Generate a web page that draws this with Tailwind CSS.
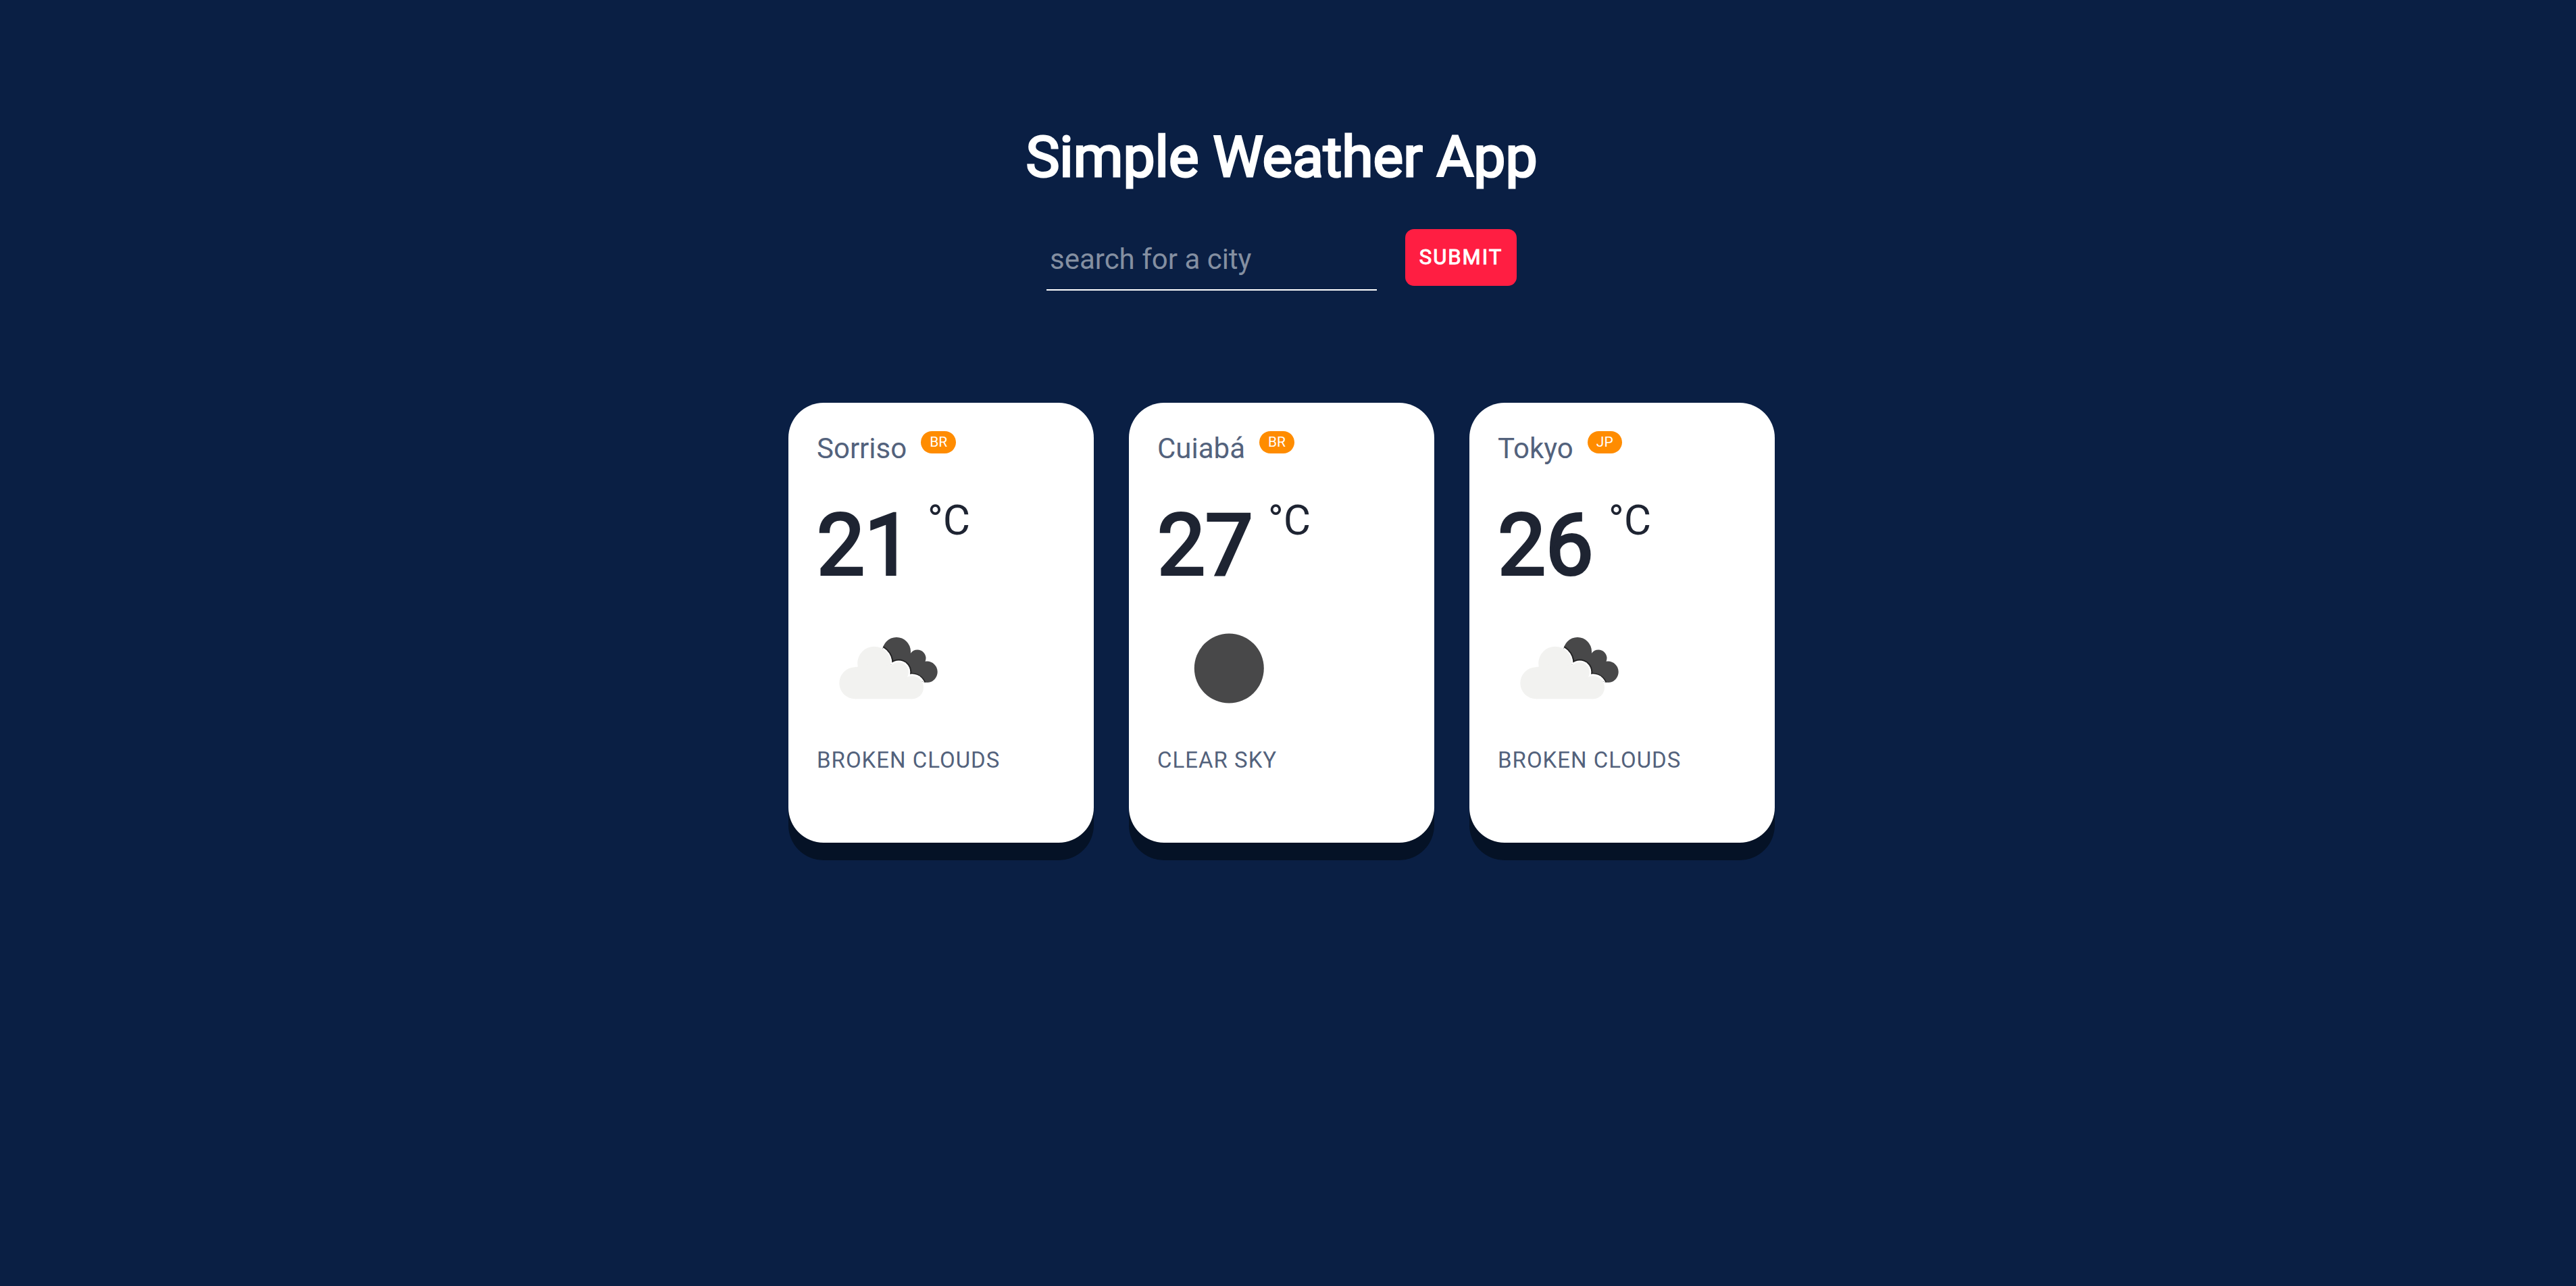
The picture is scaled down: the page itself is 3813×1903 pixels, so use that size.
<!DOCTYPE html>
<html lang="en">
<head>
<meta charset="utf-8">
<meta name="viewport" content="width=device-width, initial-scale=1">
<title>Simple Weather App</title>
<script src="https://cdn.jsdelivr.net/npm/@tailwindcss/browser@4"></script>
</head>
<body class="min-h-screen bg-[#0a1f44] pr-[19px] font-['Roboto',sans-serif] text-white">
<svg class="absolute size-0" aria-hidden="true">
  <defs>
    <clipPath id="back-cloud">
      <circle cx="118" cy="81" r="21"/><circle cx="149" cy="91" r="12.5"/><circle cx="163" cy="111.300" r="15.700"/>
      <path d="M98 76L138 84L150 100L163 112L163 127L120 115Z"/>
    </clipPath>
    <symbol id="broken-clouds" viewBox="0 0 212 212">
      <g clip-path="url(#back-cloud)">
        <path fill="#484849" d="M90 55H185V135H90Z"/>
        <g fill="#232324"><circle cx="84.500" cy="98.700" r="29"/><circle cx="121.300" cy="111.500" r="19"/><circle cx="141" cy="134.300" r="21.500"/></g>
        <g fill="#fff"><circle cx="84.500" cy="98.700" r="27"/><circle cx="121.300" cy="111.500" r="17"/><circle cx="141" cy="134.300" r="20"/><path d="M85 99L121 111L141 134L120 140Z"/></g>
      </g>
      <g fill="#f2f2f0"><circle cx="56.800" cy="127.800" r="23.500"/><circle cx="85" cy="98.500" r="24.800"/><circle cx="121.300" cy="111.500" r="14.500"/><circle cx="141" cy="134.300" r="17"/><path d="M56.800 104.300L85 99L121 104L141 134.300V151.300H56.800Z"/></g>
    </symbol>
    <symbol id="clear-sky" viewBox="0 0 212 212"><circle cx="106.300" cy="106" r="51.500" fill="#484849"/></symbol>
  </defs>
</svg>
<header class="flex flex-col items-center px-6 pt-[189px]">
  <h1 class="text-center text-[84px] leading-[88px] font-normal [-webkit-text-stroke:3px_white]">Simple Weather App</h1>
  <form class="mt-[62px] flex flex-wrap items-start justify-center gap-[42px]">
    <input type="text" aria-label="City" placeholder="search for a city" class="h-[91px] w-[489px] max-w-full border-b-2 border-white bg-transparent px-[5px] text-[42px] outline-none placeholder:text-[#848fa1]">
    <button type="submit" class="h-[84px] w-[165px] rounded-[13px] bg-[#ff1e42] text-[31px] leading-[42px] tracking-[2px] [-webkit-text-stroke:1px_white]">SUBMIT</button>
  </form>
</header>
<main class="px-6 pt-[166px] pb-20">
  <ul class="flex flex-wrap justify-center gap-[52px]">
    <li class="w-[452px] rounded-[52px] bg-white px-[42px] pt-[42px] pb-[100px] text-[#1e2432] shadow-[0_26px_0_#051226]">
      <h2 class="flex items-start gap-[21px] text-[42px] leading-[52px] text-[#53627c]">Sorriso <span class="rounded-full bg-[#ff8c00] px-[13px] text-[21px] leading-[33px] text-white">BR</span></h2>
      <p class="mt-[51px] flex items-start gap-[22px] text-[126px] leading-[133px]"><span class="[-webkit-text-stroke:4px]">21</span> <span class="text-[62px] leading-[58px]">°C</span></p>
      <figure class="mt-[9px]">
        <svg class="size-[212px]" role="img" aria-label="Broken clouds"><use href="#broken-clouds"/></svg>
        <figcaption class="mt-2 text-[33px] leading-[44px] tracking-[1px] text-[#53627c]">BROKEN CLOUDS</figcaption>
      </figure>
    </li>
    <li class="w-[452px] rounded-[52px] bg-white px-[42px] pt-[42px] pb-[100px] text-[#1e2432] shadow-[0_26px_0_#051226]">
      <h2 class="flex items-start gap-[21px] text-[42px] leading-[52px] text-[#53627c]">Cuiabá <span class="rounded-full bg-[#ff8c00] px-[13px] text-[21px] leading-[33px] text-white">BR</span></h2>
      <p class="mt-[51px] flex items-start gap-[22px] text-[126px] leading-[133px]"><span class="[-webkit-text-stroke:4px]">27</span> <span class="text-[62px] leading-[58px]">°C</span></p>
      <figure class="mt-[9px]">
        <svg class="size-[212px]" role="img" aria-label="Clear sky"><use href="#clear-sky"/></svg>
        <figcaption class="mt-2 text-[33px] leading-[44px] tracking-[1px] text-[#53627c]">CLEAR SKY</figcaption>
      </figure>
    </li>
    <li class="w-[452px] rounded-[52px] bg-white px-[42px] pt-[42px] pb-[100px] text-[#1e2432] shadow-[0_26px_0_#051226]">
      <h2 class="flex items-start gap-[21px] text-[42px] leading-[52px] text-[#53627c]">Tokyo <span class="rounded-full bg-[#ff8c00] px-[13px] text-[21px] leading-[33px] text-white">JP</span></h2>
      <p class="mt-[51px] flex items-start gap-[22px] text-[126px] leading-[133px]"><span class="[-webkit-text-stroke:4px]">26</span> <span class="text-[62px] leading-[58px]">°C</span></p>
      <figure class="mt-[9px]">
        <svg class="size-[212px]" role="img" aria-label="Broken clouds"><use href="#broken-clouds"/></svg>
        <figcaption class="mt-2 text-[33px] leading-[44px] tracking-[1px] text-[#53627c]">BROKEN CLOUDS</figcaption>
      </figure>
    </li>
  </ul>
</main>
</body>
</html>
